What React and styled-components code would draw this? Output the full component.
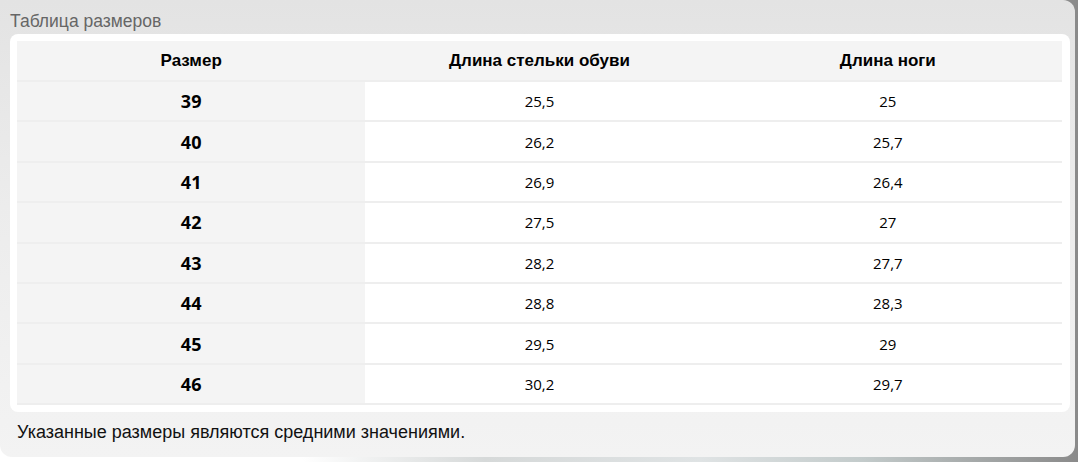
import React from "react";
import styled, { createGlobalStyle } from "styled-components";

const GlobalStyle = createGlobalStyle`
  html, body {
    margin: 0;
    padding: 0;
  }
  body {
    width: 1078px;
    height: 462px;
    overflow: hidden;
    background: linear-gradient(to right, #ffffff 28%, #d6d9d9 45%, #dfe3e4 65%, #c3cbcb 80%, #8a8a8a 100%);
    font-family: "Liberation Sans", Arial, sans-serif;
  }
`;

const Panel = styled.div`
  width: 1075px;
  height: 457px;
  box-sizing: border-box;
  padding: 9px 5px 0 10px;
  border-radius: 0 12px 12px 12px;
  background: linear-gradient(to bottom, #e3e3e3 0%, #ececec 45%, #f3f3f3 100%);
  display: flex;
  flex-direction: column;
`;

const Title = styled.div`
  font-size: 17.5px;
  line-height: 25px;
  color: #666666;
  height: 25px;
`;

const Card = styled.div`
  background: #ffffff;
  border-radius: 8px;
  padding: 7px 8px 7px 7px;
`;

const Table = styled.table`
  width: 100%;
  border-collapse: collapse;
  table-layout: fixed;
`;

const HeadCell = styled.th`
  background: #f4f4f4;
  height: 39px;
  padding: 0;
  font-family: "Liberation Sans", Arial, sans-serif;
  font-size: 17px;
  font-weight: bold;
  color: #000;
  text-align: center;
  border-bottom: 2px solid #eeeeee;
`;

const Cell = styled.td`
  height: 38.4px;
  padding: 0;
  text-align: center;
  font-family: "Open Sans", "Noto Sans", sans-serif;
  font-size: ${(p) => (p.$key ? "18px" : "15px")};
  color: #000;
  font-weight: ${(p) => (p.$key ? 700 : 400)};
  background: ${(p) => (p.$key ? "#f4f4f4" : "#ffffff")};
  border-bottom: 2px solid #eeeeee;
`;

const Note = styled.div`
  flex: 1;
  display: flex;
  align-items: center;
  padding-left: 7px;
  padding-bottom: 4px;
  font-size: 18px;
  color: #111;
`;

const rows = [
  ["39", "25,5", "25"],
  ["40", "26,2", "25,7"],
  ["41", "26,9", "26,4"],
  ["42", "27,5", "27"],
  ["43", "28,2", "27,7"],
  ["44", "28,8", "28,3"],
  ["45", "29,5", "29"],
  ["46", "30,2", "29,7"],
];

export default function App() {
  return (
    <>
      <GlobalStyle />
      <Panel>
        <Title>Таблица размеров</Title>
        <Card>
          <Table>
            <thead>
              <tr>
                <HeadCell>Размер</HeadCell>
                <HeadCell>Длина стельки обуви</HeadCell>
                <HeadCell>Длина ноги</HeadCell>
              </tr>
            </thead>
            <tbody>
              {rows.map((r) => (
                <tr key={r[0]}>
                  <Cell $key>{r[0]}</Cell>
                  <Cell>{r[1]}</Cell>
                  <Cell>{r[2]}</Cell>
                </tr>
              ))}
            </tbody>
          </Table>
        </Card>
        <Note>Указанные размеры являются средними значениями.</Note>
      </Panel>
    </>
  );
}
